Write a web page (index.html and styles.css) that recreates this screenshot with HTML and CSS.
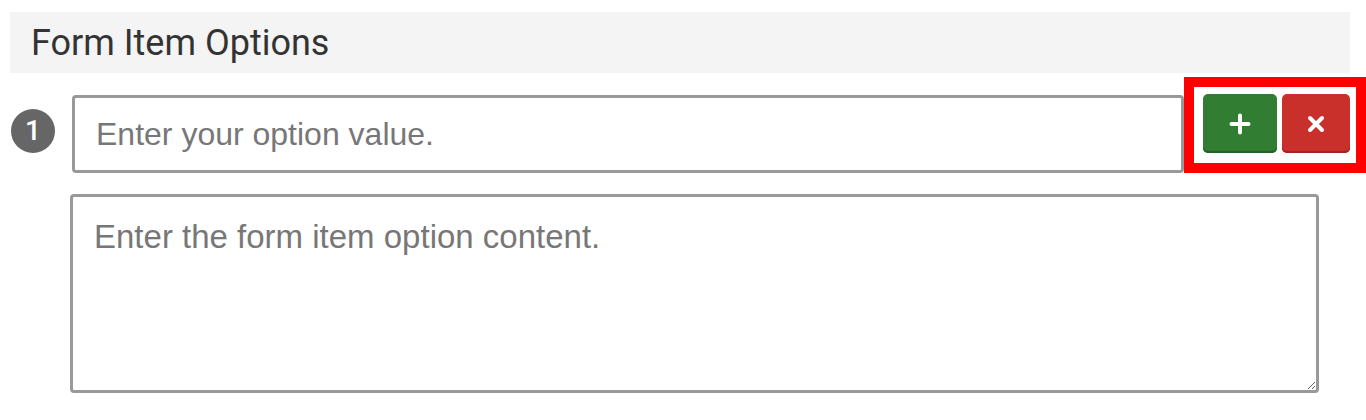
FILE: index.html
```html
<!DOCTYPE html>
<html lang="en">
<head>
<meta charset="utf-8">
<title>Form Item Options</title>
<link rel="stylesheet" href="styles.css">
</head>
<body>
  <div class="panel-header">Form Item Options</div>
  <div class="option-row">
    <span class="option-num">1</span>
    <input class="option-value" type="text" placeholder="Enter your option value.">
    <div class="btn-group">
      <button class="btn btn-add" type="button" aria-label="Add">
        <svg width="22" height="22" viewBox="0 0 22 22"><path d="M11 2.5v17M2.5 11h17" stroke="#fff" stroke-width="4" stroke-linecap="round"/></svg>
      </button>
      <button class="btn btn-remove" type="button" aria-label="Remove">
        <svg width="18" height="18" viewBox="0 0 18 18"><path d="M3 3l12 12M15 3L3 15" stroke="#fff" stroke-width="4" stroke-linecap="round"/></svg>
      </button>
    </div>
  </div>
  <textarea class="option-content" placeholder="Enter the form item option content."></textarea>
</body>
</html>
```
FILE: styles.css
```css
html, body {
  margin: 0;
  padding: 0;
  background: #fff;
}
body {
  padding-top: 12px;
  font-family: "Liberation Sans", Arial, sans-serif;
}
.panel-header {
  margin: 0 16px 0 10px;
  height: 61px;
  background: #f4f4f4;
  padding-left: 21px;
  font-family: Roboto, "Liberation Sans", sans-serif;
  font-size: 36px;
  line-height: 63px;
  color: #333;
}
.option-row {
  display: flex;
  align-items: flex-end;
  margin-top: 4px;
}
.option-num {
  align-self: flex-end;
  margin: 0 0 20px 11px;
  width: 44px;
  height: 44px;
  border-radius: 50%;
  background: #666;
  color: #fff;
  font-family: Roboto, "Liberation Sans", sans-serif;
  font-weight: 500;
  font-size: 28px;
  line-height: 44px;
  text-align: center;
  flex: none;
}
.option-value {
  margin-left: 17px;
  flex: 1;
  min-width: 0;
  height: 78px;
  box-sizing: border-box;
  border: 3px solid #999;
  border-radius: 4px;
  padding: 0 21px;
  font-family: "Liberation Sans", Arial, sans-serif;
  font-size: 32px;
  color: #333;
  outline: none;
}
.option-value::placeholder,
.option-content::placeholder {
  color: #777;
}
.btn-group {
  flex: none;
  box-sizing: border-box;
  width: 182px;
  height: 96px;
  border: 10px solid #ff0000;
  padding: 7px 6px 0 9px;
  display: flex;
  gap: 5px;
  align-items: flex-start;
}
.btn {
  height: 59px;
  border: none;
  border-radius: 5px;
  padding: 0;
  display: flex;
  align-items: center;
  justify-content: center;
  cursor: pointer;
}
.btn-add {
  width: 74px;
  background: #317d32;
  box-shadow: inset 0 -2px 0 #25622a;
}
.btn-remove {
  width: 68px;
  background: #c9302c;
  box-shadow: inset 0 -2px 0 #a32420;
}
.option-content {
  display: block;
  margin: 21px 0 0 70px;
  width: 1249px;
  height: 199px;
  box-sizing: border-box;
  border: 3px solid #999;
  border-radius: 4px;
  padding: 21px 21px;
  font-family: "Liberation Sans", Arial, sans-serif;
  font-size: 33px;
  color: #333;
  resize: vertical;
  outline: none;
}
```
